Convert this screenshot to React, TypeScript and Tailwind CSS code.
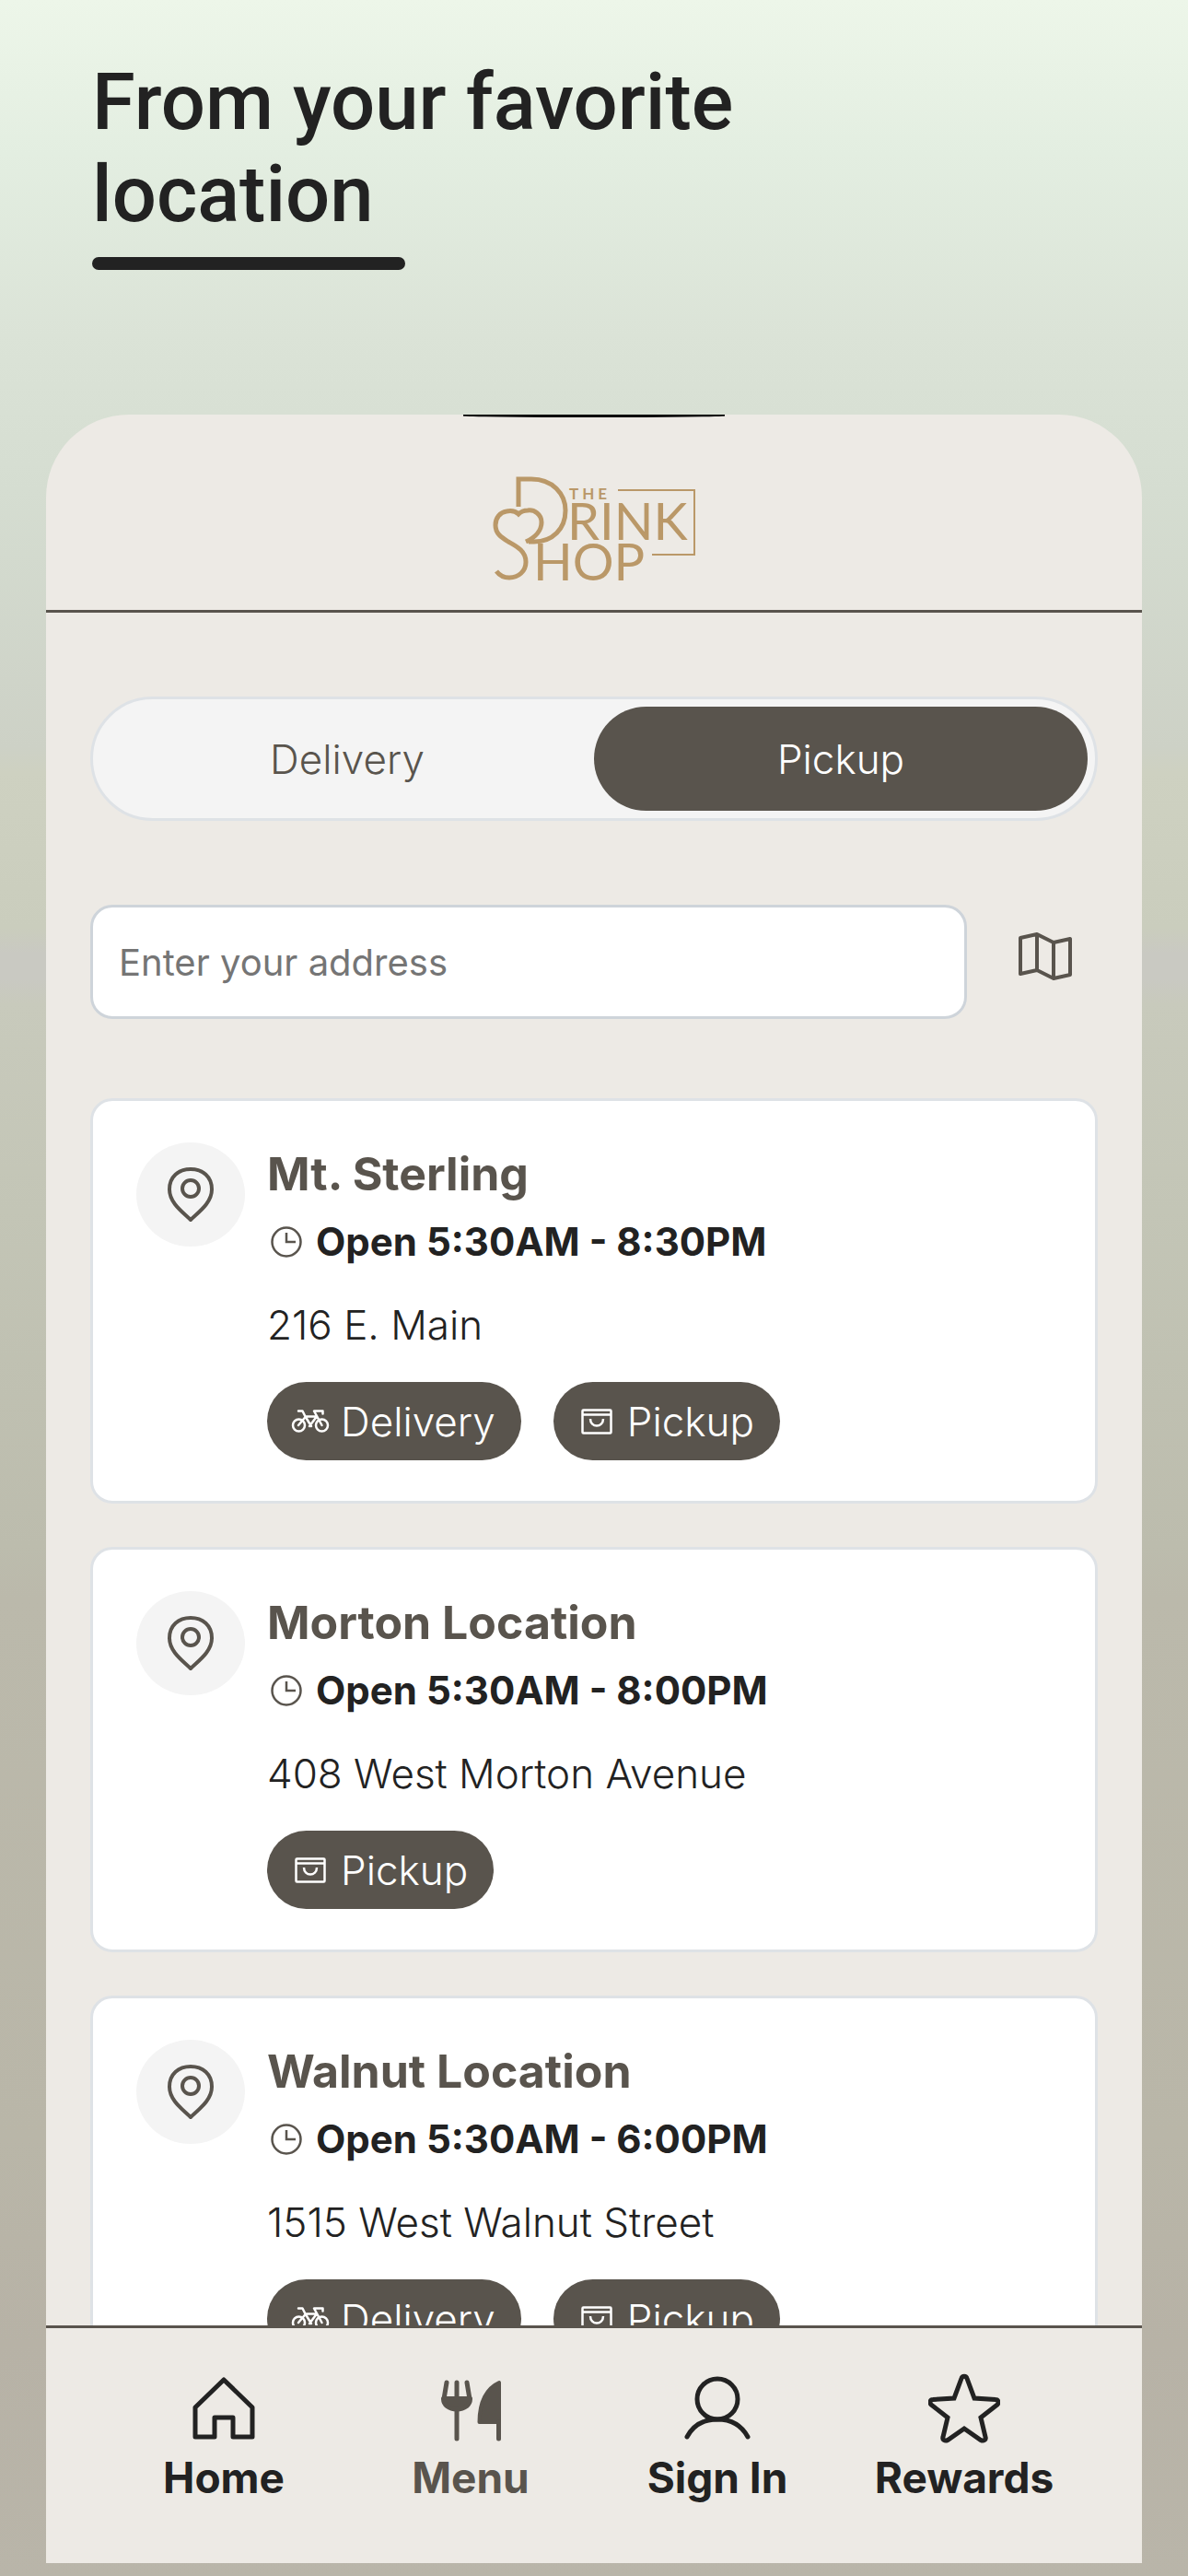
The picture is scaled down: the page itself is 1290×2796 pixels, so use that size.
import React, { useState } from 'react';

interface StoreLocation {
  name: string;
  hours: string;
  address: string;
  services: Service[];
}

type Service = 'Delivery' | 'Pickup';

const locations: StoreLocation[] = [
  {
    name: 'Mt. Sterling',
    hours: 'Open 5:30AM - 8:30PM',
    address: '216 E. Main',
    services: ['Delivery', 'Pickup'],
  },
  {
    name: 'Morton Location',
    hours: 'Open 5:30AM - 8:00PM',
    address: '408 West Morton Avenue',
    services: ['Pickup'],
  },
  {
    name: 'Walnut Location',
    hours: 'Open 5:30AM - 6:00PM',
    address: '1515 West Walnut Street',
    services: ['Delivery', 'Pickup'],
  },
];

const Logo: React.FC = () => (
  <svg
    role="img"
    aria-label="The Drink Shop"
    viewBox="0 0 220 114"
    className="w-[220px] h-[114px] text-[#ba9868]"
    fill="none"
    stroke="currentColor"
  >
    {/* D flowing through the heart into the S */}
    <path d="M28 33V3h14c23 0 37 16 37 34 0 20-14 34-34 34h-6" strokeWidth="5" />
    <path
      d="M36 71c11-5 17-13 17-21 0-9-8-14-15-13-5 0-8 2-10 4-3-3-8-4-13-3C8 39 3 45 3 53c0 9 6 13 14 18 9 5 19 10 19 22 0 10-8 17-18 17-7 0-11-3-14-7"
      strokeWidth="5"
    />
    <path d="M136 15h83v70h-46" strokeWidth="2" />
    <g fill="currentColor" stroke="none" fontFamily="Lato, sans-serif">
      <text x="83" y="25" fontSize="17" fontWeight="700" letterSpacing="4">THE</text>
      <text x="81" y="69" fontSize="56">RINK</text>
      <text x="44" y="113" fontSize="56">HOP</text>
    </g>
  </svg>
);

const PinIcon: React.FC = () => (
  <svg viewBox="0 0 50 60" className="w-[50px] h-[60px]" fill="none" stroke="currentColor" strokeWidth="4" strokeLinejoin="round">
    <path d="M25 57C17 49 2 39 2 24 2 10 12 2 25 2s23 8 23 22c0 15-15 25-23 33z" />
    <circle cx="25" cy="23" r="9" />
  </svg>
);

const ClockIcon: React.FC = () => (
  <svg viewBox="0 0 34 34" className="w-[34px] h-[34px]" fill="none" stroke="currentColor" strokeWidth="2.5">
    <circle cx="17" cy="17" r="15.5" />
    <path d="M17 7v10h10" />
  </svg>
);

const BikeIcon: React.FC = () => (
  <svg viewBox="0 0 42 25" className="w-[42px] h-[25px]" fill="none" stroke="currentColor" strokeWidth="2.5" strokeLinecap="round" strokeLinejoin="round">
    <circle cx="8.500" cy="17" r="6.500" />
    <circle cx="33.500" cy="17" r="6.500" />
    <path d="M8 17l8-9.500h12M8 1.500h4.500l3 6 6.500 10.500M20 18l7.500-10M33.500 17L25 1.500h9.500v3" />
  </svg>
);

const BagIcon: React.FC = () => (
  <svg viewBox="0 0 34 28" className="w-[34px] h-[28px]" fill="none" stroke="currentColor" strokeWidth="2.5" strokeLinejoin="round">
    <rect x="1.500" y="1.500" width="31" height="25" rx="1" />
    <path d="M1 6.500h32M10 11c0 10 14 10 14 0" />
  </svg>
);

const MapIcon: React.FC = () => (
  <svg viewBox="0 0 58 52" className="w-[58px] h-[52px]" fill="none" stroke="currentColor" strokeWidth="4" strokeLinejoin="round">
    <path d="M2 6l18-4 18 9 18-4v39l-18 4-18-9-18 4zM20 2v39M38 11v39" />
  </svg>
);

const HomeIcon: React.FC = () => (
  <svg viewBox="0 0 78 78" className="size-[78px]" fill="none" stroke="currentColor" strokeWidth="5" strokeLinejoin="round">
    <path d="M39 8l31 30v32H49V49H29v21H8V38z" />
  </svg>
);

const MenuIcon: React.FC = () => (
  <svg viewBox="0 0 78 78" className="size-[78px]" fill="currentColor" stroke="currentColor" strokeWidth="5" strokeLinecap="round" strokeLinejoin="round">
    <path d="M13 11l-3 18M24 11v61M35 11l3 18" fill="none" />
    <path d="M9.500 28.500h29c0 7-6 11.500-14.500 11.500S9.500 35.500 9.500 28.500z" />
    <path d="M70 11v43H48.500c0-22 8-37 21.500-43z" strokeWidth="4" />
    <path d="M69.500 54v18" />
  </svg>
);

const UserIcon: React.FC = () => (
  <svg viewBox="0 0 78 78" className="size-[78px]" fill="none" stroke="currentColor" strokeWidth="5" strokeLinecap="round">
    <circle cx="39" cy="29" r="22" />
    <path d="M6 70c7-13 19-19 33-19s26 6 33 19" />
  </svg>
);

const StarIcon: React.FC = () => (
  <svg viewBox="0 0 78 78" className="size-[78px]" fill="none" stroke="currentColor" strokeWidth="5">
    <path d="M36 6.500c1-3 5-3 6 0L50 28l23 1.500c3 0 4 3 2 5.500L57 49l5 21c1 3-2 5-5 3.500L39 61 21 73.500c-3 1.500-6-.5-5-3.500l5-21L3 35c-2-2.500-1-5.500 2-5.500L28 28z" />
  </svg>
);

const ServiceBadge: React.FC<{ service: Service }> = ({ service }) => (
  <span className="flex items-center gap-[10px] h-[85px] pl-6 pr-7 rounded-full bg-[#59544d] text-white font-light text-[44px]">
    <span className="flex justify-center w-[46px]">
      {service === 'Delivery' ? <BikeIcon /> : <BagIcon />}
    </span>
    {service}
  </span>
);

const LocationCard: React.FC<StoreLocation> = ({ name, hours, address, services }) => (
  <li className="flex h-[440px] shrink-0 rounded-3xl border-3 border-[#dee2e6] bg-white px-[47px] pt-[45px]">
    <div className="flex items-center justify-center w-[118px] h-[113px] shrink-0 rounded-[50%] bg-[#f4f4f4] text-[#59544d]">
      <PinIcon />
    </div>
    <div className="ml-6 min-w-0 flex-1">
      <h2 className="text-[50px] leading-[68px] font-bold text-[#59544d]">{name}</h2>
      <div className="mt-1.5 flex items-center text-[#59544d]">
        <span className="mx-1"><ClockIcon /></span>
        <span className="ml-[11px] text-[42px] leading-[68px] font-bold text-[#222222]">{hours}</span>
      </div>
      <p className="mt-[22px] text-[44px] leading-[68px] font-light text-[#222222]">{address}</p>
      <div className="mt-7 flex gap-[35px]">
        {services.map((service) => (
          <ServiceBadge key={service} service={service} />
        ))}
      </div>
    </div>
  </li>
);

const navItems = [
  { label: 'Home', icon: <HomeIcon />, active: false },
  { label: 'Menu', icon: <MenuIcon />, active: true },
  { label: 'Sign In', icon: <UserIcon />, active: false },
  { label: 'Rewards', icon: <StarIcon />, active: false },
];

const App: React.FC = () => {
  const [mode, setMode] = useState<Service>('Pickup');

  return (
    <div className="flex flex-col h-screen overflow-hidden px-[50px] pb-[14px] font-['Inter',sans-serif] bg-[linear-gradient(180deg,#edf6e9_0%,#e3eee1_6%,#dbe3d7_13%,#d5ddd1_19%,#cdd1c6_29%,#ced1c1_30%,#cacdbd_36%,#c9c9c2_37%,#c9c9c2_38%,#c8cabc_39%,#c3c5b6_47%,#bcbcad_60%,#bbb9ab_62%,#b9b6a8_83%,#b7b2a6_91%,#b9b5a9_100%)]">
      <header className="px-[50px] pt-[61px] pb-[157px]">
        <h1 className="max-w-[800px] font-['Roboto',sans-serif] text-[85px] leading-[100px] font-medium text-[#222222]">
          From your favorite location
        </h1>
        <div className="mt-[18px] w-[340px] h-[14px] rounded-full bg-[#222222]" />
      </header>

      <main className="flex flex-col flex-1 min-h-0 overflow-hidden rounded-t-[90px] bg-[#edeae5]">
        <div className="mx-auto w-[284px] h-[3px] shrink-0 rounded-b-[50%] bg-black" />
        <div className="flex justify-center shrink-0 pt-16 pb-[31px] border-b-3 border-[#59544d]">
          <Logo />
        </div>

        <div className="flex flex-col flex-1 min-h-0 overflow-hidden px-12 pt-[91px]">
          <div className="flex h-[135px] shrink-0 rounded-full border-3 border-[#dee2e6] bg-[#f4f4f4] p-2">
            {(['Delivery', 'Pickup'] as Service[]).map((option) => (
              <button
                key={option}
                type="button"
                aria-pressed={mode === option}
                onClick={() => setMode(option)}
                className={`flex-1 rounded-full text-[44px] font-light ${
                  mode === option ? 'bg-[#59544d] text-white' : 'text-[#59544d]'
                }`}
              >
                {option}
              </button>
            ))}
          </div>

          <div className="mt-[91px] flex shrink-0 items-center">
            <input
              type="text"
              aria-label="Address"
              placeholder="Enter your address"
              className="h-[124px] min-w-0 flex-1 rounded-3xl border-3 border-[#ced4da] bg-white px-7 text-[40px] text-[#222222] placeholder:text-[#757575]"
            />
            <button type="button" aria-label="Show map" className="pl-14 pr-7 pb-3 text-[#59544d]">
              <MapIcon />
            </button>
          </div>

          <ul className="mt-[86px] flex flex-col gap-[47px]">
            {locations.map((location) => (
              <LocationCard key={location.name} {...location} />
            ))}
          </ul>
        </div>

        <nav className="grid grid-cols-4 h-[258px] shrink-0 border-t-3 border-[#59544d] px-[59px] pt-12">
          {navItems.map(({ label, icon, active }) => (
            <a
              key={label}
              href="#"
              className={`flex flex-col items-center text-[46px] leading-[60px] font-bold ${
                active ? 'text-[#59544d]' : 'text-[#222222]'
              }`}
            >
              {icon}
              <span className="mt-1.5">{label}</span>
            </a>
          ))}
        </nav>
      </main>
    </div>
  );
};

export default App;
